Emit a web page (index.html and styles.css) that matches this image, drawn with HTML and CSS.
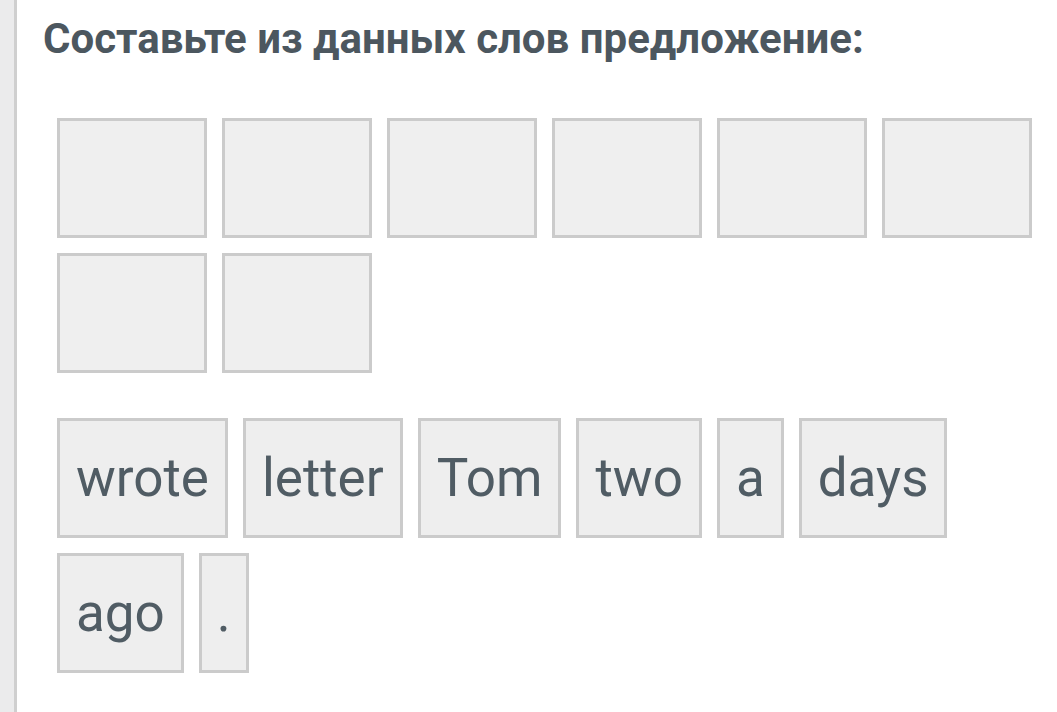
FILE: index.html
```html
<!DOCTYPE html>
<html lang="ru">
<head>
<meta charset="utf-8">
<title>Составьте предложение</title>
<link rel="stylesheet" href="styles.css">
</head>
<body>
<div class="page">
  <div class="side"></div>
  <main class="main">
    <h1 class="title">Составьте из данных слов предложение:</h1>
    <div class="task">
      <div class="slots">
        <div class="slot"></div>
        <div class="slot"></div>
        <div class="slot"></div>
        <div class="slot"></div>
        <div class="slot"></div>
        <div class="slot"></div>
        <div class="slot"></div>
        <div class="slot"></div>
      </div>
      <div class="words">
        <div class="word">wrote</div>
        <div class="word">letter</div>
        <div class="word">Tom</div>
        <div class="word">two</div>
        <div class="word">a</div>
        <div class="word">days</div>
        <div class="word">ago</div>
        <div class="word dot">.</div>
      </div>
    </div>
  </main>
</div>
</body>
</html>
```
FILE: styles.css
```css
html, body {
  margin: 0;
  padding: 0;
  background: #ffffff;
  height: 100%;
}
.page {
  display: flex;
  min-height: 712px;
  font-family: Roboto, "Liberation Sans", sans-serif;
  color: #4f5b63;
}
.side {
  width: 14px;
  flex: none;
  background: #ebebec;
  border-right: 3px solid #cfcfcf;
}
.main {
  flex: 1;
  padding: 0 0 0 26px;
}
.title {
  margin: 14px 0 0 0;
  font-size: 42px;
  line-height: 50px;
  font-weight: 700;
  color: #4c575f;
}
.task {
  padding: 0 0 0 14px;
  width: 990px;
}
.slots {
  margin-top: 54px;
  display: flex;
  flex-wrap: wrap;
  gap: 15px;
}
.slot {
  box-sizing: border-box;
  width: 150px;
  height: 120px;
  background: #efefef;
  border: 3px solid #cbcbcb;
}
.words {
  margin-top: 45px;
  display: flex;
  flex-wrap: wrap;
  gap: 15px;
}
.word {
  box-sizing: border-box;
  height: 120px;
  padding: 0 16px;
  background: #eeeeee;
  border: 3px solid #cbcbcb;
  font-size: 53px;
  line-height: 114px;
  color: #505c64;
}
.word.dot {
  padding: 0 15px;
}
```
